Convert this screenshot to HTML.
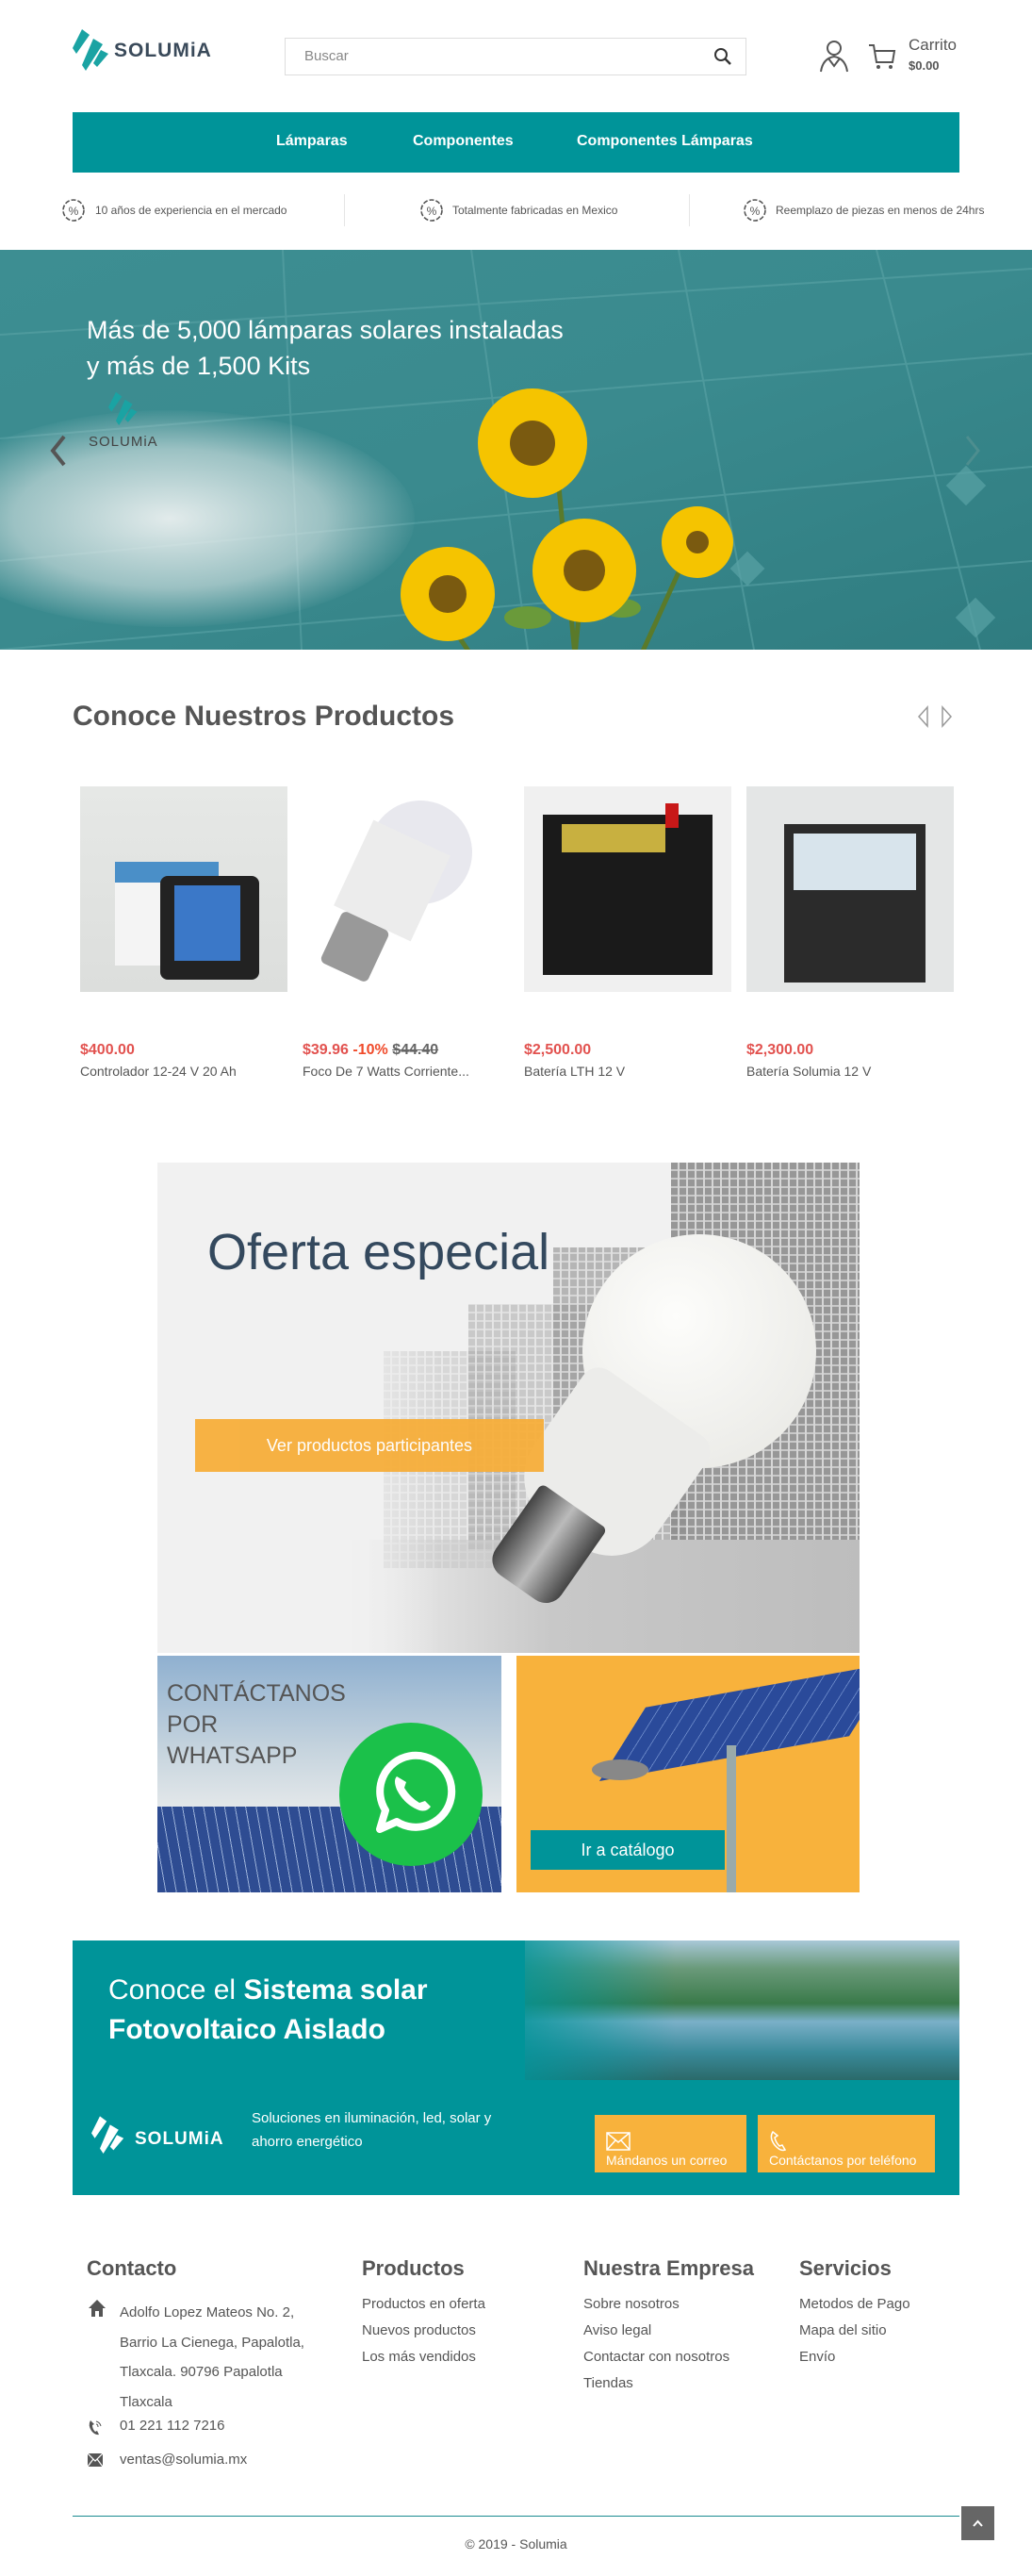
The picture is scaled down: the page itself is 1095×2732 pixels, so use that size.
<!DOCTYPE html>
<html><head><meta charset="utf-8"><style>
*{margin:0;padding:0;box-sizing:border-box}
body{width:1095px;height:2732px;position:relative;background:#fff;font-family:"Liberation Sans",sans-serif;color:#555;overflow:hidden}
.a{position:absolute}
.teal{background:#009499}
.nav a{color:#fff;font-weight:bold;font-size:16px;position:absolute;top:141px}
.feat{font-size:12px;color:#555;top:216px}
.prod{top:834px;width:220px;height:218px;background:#e8e8e8}
.price{color:#e2524f;font-weight:bold;font-size:16px;top:1105px}
.pname{font-size:14px;color:#555;top:1128px}
.fh{font-size:22px;font-weight:bold;color:#555;top:2393px}
.fl{font-size:15px;color:#555;line-height:28px;top:2430px}
.pan{background:repeating-linear-gradient(90deg,transparent 0 7px,#d4d4d4 7px 9px),repeating-linear-gradient(0deg,#8e8e8e 0 7px,#c4c4c4 7px 9px)}
</style></head><body>

<!-- header -->
<svg class="a" style="left:77px;top:31px" width="40" height="48" viewBox="0 0 40 48"><polygon points="10,0 18,6 4,26 0,20" fill="#1aa3a3"/><polygon points="22,10 32,16 14,44 10,38" fill="#1aa3a3"/><polygon points="30,22 38,26 26,40 22,36" fill="#1aa3a3"/></svg>
<div class="a" style="left:121px;top:42px;font-size:21px;font-weight:bold;color:#3a4a5a;letter-spacing:1px">SOLUMiA</div>
<div class="a" style="left:302px;top:40px;width:490px;height:40px;border:1px solid #ddd"></div>
<div class="a" style="left:323px;top:51px;font-size:15px;color:#888">Buscar</div>
<svg class="a" style="left:757px;top:50px" width="20" height="20" viewBox="0 0 20 20"><circle cx="8" cy="8" r="6" fill="none" stroke="#333" stroke-width="2"/><line x1="12.5" y1="12.5" x2="18" y2="18" stroke="#333" stroke-width="2.5"/></svg>
<svg class="a" style="left:868px;top:40px" width="34" height="38" viewBox="0 0 34 38"><circle cx="17" cy="11" r="7" fill="none" stroke="#555" stroke-width="2"/><path d="M3 36 Q5 22 17 20 Q29 22 31 36" fill="none" stroke="#555" stroke-width="2"/><path d="M11 22 L17 30 L23 22" fill="none" stroke="#555" stroke-width="2"/></svg>
<svg class="a" style="left:920px;top:44px" width="32" height="32" viewBox="0 0 32 32"><path d="M2 4 H7 L10 22 H27 L29 10 H9" fill="none" stroke="#555" stroke-width="2"/><circle cx="12" cy="27" r="2" fill="#555"/><circle cx="25" cy="27" r="2" fill="#555"/></svg>
<div class="a" style="left:964px;top:38px;font-size:17px;color:#555">Carrito</div>
<div class="a" style="left:964px;top:62px;font-size:13px;color:#555;font-weight:bold">$0.00</div>

<div class="a teal nav" style="left:77px;top:119px;width:941px;height:64px"></div>
<div class="nav"><a style="left:293px">Lámparas</a><a style="left:438px">Componentes</a><a style="left:612px">Componentes Lámparas</a></div>

<svg class="a" style="left:64px;top:209px" width="28" height="28" viewBox="0 0 28 28"><circle cx="14" cy="14" r="11" fill="none" stroke="#555" stroke-width="1.6" stroke-dasharray="5 2"/><text x="14" y="19" font-size="12" text-anchor="middle" fill="#555" font-family="Liberation Sans">%</text></svg>
<div class="a feat" style="left:101px">10 años de experiencia en el mercado</div>
<div class="a" style="left:365px;top:206px;width:1px;height:34px;background:#e5e5e5"></div>
<svg class="a" style="left:444px;top:209px" width="28" height="28" viewBox="0 0 28 28"><circle cx="14" cy="14" r="11" fill="none" stroke="#555" stroke-width="1.6" stroke-dasharray="5 2"/><text x="14" y="19" font-size="12" text-anchor="middle" fill="#555" font-family="Liberation Sans">%</text></svg>
<div class="a feat" style="left:480px">Totalmente fabricadas en Mexico</div>
<div class="a" style="left:731px;top:206px;width:1px;height:34px;background:#e5e5e5"></div>
<svg class="a" style="left:787px;top:209px" width="28" height="28" viewBox="0 0 28 28"><circle cx="14" cy="14" r="11" fill="none" stroke="#555" stroke-width="1.6" stroke-dasharray="5 2"/><text x="14" y="19" font-size="12" text-anchor="middle" fill="#555" font-family="Liberation Sans">%</text></svg>
<div class="a feat" style="left:823px">Reemplazo de piezas en menos de 24hrs</div>

<!-- hero -->
<div class="a" style="left:0;top:265px;width:1095px;height:424px;background:linear-gradient(160deg,#3d8e92 0%,#3a8a8e 50%,#2f7c80 100%);overflow:hidden">
 <svg width="1095" height="424" style="position:absolute;left:0;top:0"><g stroke="#5aa3a6" stroke-width="2" fill="none" opacity=".6"><path d="M0 90 L1095 20"/><path d="M0 200 L1095 110"/><path d="M0 330 L1095 230"/><path d="M0 424 L1095 330"/><path d="M500 0 L560 424"/><path d="M720 0 L800 424"/><path d="M930 0 L1040 424"/><path d="M300 0 L320 424"/></g><g fill="#5aa3a6" opacity=".7"><rect x="1010" y="235" width="30" height="30" transform="rotate(45 1025 250)"/><rect x="780" y="325" width="26" height="26" transform="rotate(45 793 338)"/><rect x="1020" y="375" width="30" height="30" transform="rotate(45 1035 390)"/></g></svg>
 <div style="position:absolute;left:-80px;top:170px;width:520px;height:230px;border-radius:50%;background:radial-gradient(ellipse,rgba(235,240,240,.95) 0%,rgba(220,230,230,.6) 45%,rgba(200,215,215,0) 72%)"></div>
 <svg width="400" height="290" style="position:absolute;left:410px;top:140px" viewBox="0 0 400 290"><g stroke="#5a7a2a" stroke-width="5" fill="none"><path d="M180 80 L200 290"/><path d="M210 190 L200 290"/><path d="M320 180 L270 290"/><path d="M70 260 L90 290"/></g><g fill="#6a9a3a"><ellipse cx="150" cy="250" rx="25" ry="12"/><ellipse cx="250" cy="240" rx="20" ry="10"/></g>
 <g fill="#f5c400"><circle cx="155" cy="65" r="58"/><circle cx="210" cy="200" r="55"/><circle cx="65" cy="225" r="50"/><circle cx="330" cy="170" r="38"/></g><g fill="#7a5a10"><circle cx="155" cy="65" r="24"/><circle cx="210" cy="200" r="22"/><circle cx="65" cy="225" r="20"/><circle cx="330" cy="170" r="12"/></g></svg>
 <div style="position:absolute;left:92px;top:66px;font-size:27px;color:#fff;line-height:38px">Más de 5,000 lámparas solares instaladas<br>y más de 1,500 Kits</div>
 <svg style="position:absolute;left:115px;top:150px" width="32" height="40" viewBox="0 0 40 48"><polygon points="10,0 18,6 4,26 0,20" fill="#1aa3a3"/><polygon points="22,10 32,16 14,44 10,38" fill="#1aa3a3"/><polygon points="30,22 38,26 26,40 22,36" fill="#1aa3a3"/></svg>
 <div style="position:absolute;left:94px;top:195px;font-size:15px;color:#444;letter-spacing:1px">SOLUMiA</div>
 <svg style="position:absolute;left:52px;top:196px" width="20" height="34"><path d="M16 2 L4 17 L16 32" fill="none" stroke="#555" stroke-width="4"/></svg>
 <svg style="position:absolute;left:1022px;top:196px" width="20" height="34"><path d="M4 2 L16 17 L4 32" fill="none" stroke="#4d8e8f" stroke-width="3"/></svg>
</div>

<!-- products -->
<div class="a" style="left:77px;top:743px;font-size:30px;font-weight:bold;color:#555">Conoce Nuestros Productos</div>
<svg class="a" style="left:972px;top:748px" width="40" height="24"><path d="M12 2 L3 12 L12 22 Z M28 2 L37 12 L28 22 Z" fill="none" stroke="#999" stroke-width="1.5"/></svg>

<div class="a prod" style="left:85px;background:linear-gradient(#e6e8e6,#dcdedc)"><div class="a" style="left:37px;top:80px;width:110px;height:110px;background:#f4f4f4;border-top:22px solid #4a8fc8"></div><div class="a" style="left:85px;top:95px;width:105px;height:110px;background:#222;border-radius:8px"><div class="a" style="left:15px;top:10px;width:70px;height:80px;background:#3b78c8"></div></div></div>
<div class="a prod" style="left:321px;background:#fff"><div class="a" style="left:70px;top:15px;width:110px;height:110px;border-radius:50%;background:#e8e8ee;transform:rotate(30deg)"></div><div class="a" style="left:50px;top:50px;width:90px;height:100px;background:#ececec;transform:rotate(25deg)"></div><div class="a" style="left:28px;top:140px;width:55px;height:60px;background:#999;transform:rotate(25deg);border-radius:6px"></div></div>
<div class="a prod" style="left:556px;background:#f0f0f0"><div class="a" style="left:20px;top:30px;width:180px;height:170px;background:#1a1a1a"></div><div class="a" style="left:40px;top:40px;width:110px;height:30px;background:#c8b040"></div><div class="a" style="left:150px;top:18px;width:14px;height:26px;background:#c81818"></div></div>
<div class="a prod" style="left:792px;background:#e4e6e6"><div class="a" style="left:40px;top:40px;width:150px;height:168px;background:#2b2b2b"></div><div class="a" style="left:50px;top:50px;width:130px;height:60px;background:#d8e4ec"></div></div>

<div class="a price" style="left:85px">$400.00</div>
<div class="a price" style="left:321px">$39.96 <span style="color:#f04a2a">-10%</span> <span style="color:#666;text-decoration:line-through">$44.40</span></div>
<div class="a price" style="left:556px">$2,500.00</div>
<div class="a price" style="left:792px">$2,300.00</div>
<div class="a pname" style="left:85px">Controlador 12-24 V 20 Ah</div>
<div class="a pname" style="left:321px">Foco De 7 Watts Corriente...</div>
<div class="a pname" style="left:556px">Batería LTH 12 V</div>
<div class="a pname" style="left:792px">Batería Solumia 12 V</div>

<!-- offer -->
<div class="a" style="left:167px;top:1233px;width:745px;height:520px;background:#f1f1f1;overflow:hidden">
 <div class="a pan" style="left:240px;top:200px;width:140px;height:230px;opacity:.25"></div>
 <div class="a pan" style="left:330px;top:150px;width:140px;height:260px;opacity:.4"></div>
 <div class="a pan" style="left:420px;top:90px;width:140px;height:320px;opacity:.6"></div>
 <div class="a pan" style="left:545px;top:0;width:200px;height:430px;opacity:.9"></div>
 <div class="a" style="left:200px;top:400px;width:545px;height:120px;background:linear-gradient(90deg,rgba(200,200,200,0),#c8c8c8 40%,#bdbdbd)"></div>
 <div class="a" style="left:0;top:0;width:300px;height:520px;background:linear-gradient(90deg,#f1f1f1 60%,rgba(241,241,241,0))"></div>
 <div class="a" style="left:451px;top:76px;width:248px;height:248px;border-radius:50%;background:radial-gradient(circle at 40% 35%,#fdfdfb,#e6e6e2)"></div>
 <div class="a" style="left:400px;top:240px;width:160px;height:170px;background:#ececea;transform:rotate(35deg);border-radius:20px 20px 60px 60px"></div>
 <div class="a" style="left:370px;top:355px;width:85px;height:105px;background:linear-gradient(90deg,#444,#bbb,#444);transform:rotate(35deg);border-radius:6px 6px 20px 20px"></div>
 <div class="a" style="left:53px;top:64px;font-size:54px;color:#34495e">Oferta especial</div>
 <div class="a" style="left:40px;top:272px;width:370px;height:56px;background:#f7ae3a;color:#fff;font-size:18px;text-align:center;line-height:56px;opacity:.95">Ver productos participantes</div>
</div>
<div class="a" style="left:167px;top:1756px;width:365px;height:251px;background:linear-gradient(#8fb0d0 0%,#c6d4de 40%,#e4e8ea 65%,#4a6aa8 66%,#2c4a90 100%);overflow:hidden">
 <div class="a" style="left:0;top:160px;width:365px;height:100px;background:repeating-linear-gradient(80deg,#2e4c92 0 10px,#9ab0d8 10px 11px)"></div>
 <div class="a" style="left:10px;top:24px;font-size:25px;color:#555;line-height:33px">CONTÁCTANOS<br>POR<br>WHATSAPP</div>
 <svg class="a" style="left:192px;top:70px" width="154" height="154" viewBox="0 0 154 154"><circle cx="77" cy="77" r="76" fill="#1bc14a"/><path d="M44 114 L50 94 A38 38 0 1 1 62 106 Z" fill="none" stroke="#fff" stroke-width="8" stroke-linejoin="round"/><path d="M62 58 Q58 62 62 72 Q70 88 86 94 Q94 96 98 90 L92 84 L86 86 Q76 80 70 70 L72 64 Z" fill="#fff"/></svg>
</div>
<div class="a" style="left:548px;top:1756px;width:364px;height:251px;background:#f8b23c;overflow:hidden">
 <div class="a" style="left:130px;top:30px;width:230px;height:80px;background:repeating-linear-gradient(90deg,#2a4a9a 0 14px,#6a88c8 14px 15px);transform:skewX(-40deg) rotate(-12deg)"></div>
 <div class="a" style="left:223px;top:95px;width:10px;height:160px;background:#9aa"></div>
 <div class="a" style="left:80px;top:110px;width:60px;height:22px;background:#888;border-radius:50%"></div>
 <div class="a" style="left:15px;top:185px;width:206px;height:42px;background:#009499;color:#fff;font-size:18px;text-align:center;line-height:42px">Ir a catálogo</div>
</div>

<!-- teal banner -->
<div class="a teal" style="left:77px;top:2058px;width:941px;height:270px;overflow:hidden">
 <div class="a" style="left:480px;top:0;width:461px;height:148px;background:linear-gradient(180deg,#a8c8d8 0%,#6a9a7a 20%,#3a7a4a 45%,#7ab0c8 58%,#3a8a9a 80%,#2a6a6a 100%)"></div>
 <div class="a" style="left:440px;top:0;width:200px;height:148px;background:linear-gradient(90deg,#009499,rgba(0,148,153,0))"></div>
 <div class="a" style="left:38px;top:32px;font-size:30px;color:#fff;line-height:42px">Conoce el <b>Sistema solar</b><br><b>Fotovoltaico Aislado</b></div>
 <svg class="a" style="left:20px;top:185px" width="36" height="46" viewBox="0 0 40 48"><polygon points="10,0 18,6 4,26 0,20" fill="#fff"/><polygon points="22,10 32,16 14,44 10,38" fill="#fff"/><polygon points="30,22 38,26 26,40 22,36" fill="#fff"/></svg>
 <div class="a" style="left:66px;top:200px;font-size:19px;font-weight:bold;color:#fff;letter-spacing:1px">SOLUMiA</div>
 <div class="a" style="left:190px;top:176px;font-size:15px;color:#fff;line-height:25px">Soluciones en iluminación, led, solar y<br>ahorro energético</div>
 <div class="a" style="left:554px;top:185px;width:161px;height:61px;background:#f8b23c"><svg class="a" style="left:12px;top:18px" width="26" height="20"><rect x="1" y="1" width="24" height="18" fill="none" stroke="#fff" stroke-width="1.5"/><path d="M1 1 L13 11 L25 1 M1 19 L10 9 M25 19 L16 9" fill="none" stroke="#fff" stroke-width="1.5"/></svg><div class="a" style="left:12px;top:40px;font-size:14px;color:#fff">Mándanos un correo</div></div>
 <div class="a" style="left:727px;top:185px;width:188px;height:61px;background:#f8b23c"><svg class="a" style="left:12px;top:16px" width="20" height="24"><path d="M4 2 Q0 8 6 16 Q12 23 17 21 L14 16 L11 17 Q7 13 6 8 L9 6 Z" fill="none" stroke="#fff" stroke-width="1.5"/></svg><div class="a" style="left:12px;top:40px;font-size:14px;color:#fff">Contáctanos por teléfono</div></div>
</div>

<!-- footer -->
<div class="a fh" style="left:92px">Contacto</div>
<div class="a fh" style="left:384px">Productos</div>
<div class="a fh" style="left:619px">Nuestra Empresa</div>
<div class="a fh" style="left:848px">Servicios</div>
<svg class="a" style="left:93px;top:2438px" width="20" height="20"><path d="M10 1 L19 10 L16 10 L16 19 L12 19 L12 13 L8 13 L8 19 L4 19 L4 10 L1 10 Z" fill="#555"/></svg>
<div class="a" style="left:127px;top:2437px;font-size:15px;line-height:31.5px">Adolfo Lopez Mateos No. 2,<br>Barrio La Cienega, Papalotla,<br>Tlaxcala. 90796 Papalotla<br>Tlaxcala</div>
<svg class="a" style="left:93px;top:2566px" width="16" height="18"><path d="M3 1 Q0 6 4 12 Q8 17 12 16 L10 12 L8 13 Q5 10 5 6 L7 5 Z" fill="#555"/><path d="M9 2 Q13 3 14 7 M9 5 Q11 5 11 8" stroke="#555" fill="none"/></svg>
<div class="a" style="left:127px;top:2564px;font-size:15px">01 221 112 7216</div>
<svg class="a" style="left:93px;top:2602px" width="16" height="14"><rect width="16" height="14" fill="#555"/><path d="M0 0 L8 8 L16 0 M0 14 L6 6 M16 14 L10 6" stroke="#fff" fill="none" stroke-width="1.2"/></svg>
<div class="a" style="left:127px;top:2600px;font-size:15px">ventas@solumia.mx</div>
<div class="a fl" style="left:384px">Productos en oferta<br>Nuevos productos<br>Los más vendidos</div>
<div class="a fl" style="left:619px">Sobre nosotros<br>Aviso legal<br>Contactar con nosotros<br>Tiendas</div>
<div class="a fl" style="left:848px">Metodos de Pago<br>Mapa del sitio<br>Envío</div>

<div class="a" style="left:77px;top:2668px;width:941px;height:1px;background:#1a8a90"></div>
<div class="a" style="left:1020px;top:2658px;width:35px;height:36px;background:#666"><svg class="a" style="left:12px;top:14px" width="11" height="8"><path d="M1 7 L5.5 2 L10 7" stroke="#fff" fill="none" stroke-width="2"/></svg></div>
<div class="a" style="left:0;top:2690px;width:1095px;text-align:center;font-size:14px;color:#555">© 2019 - Solumia</div>
</body></html>
